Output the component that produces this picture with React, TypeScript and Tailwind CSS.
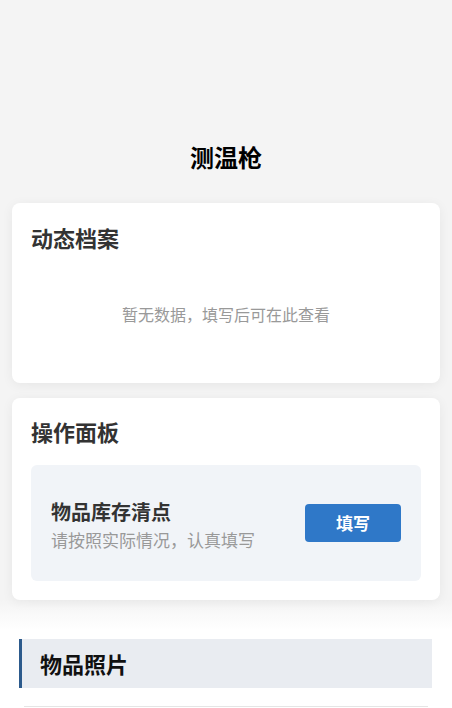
import React from "react";

const font = { fontFamily: '"Noto Sans CJK SC", "Noto Sans", sans-serif' };

function Card({ children, className = "" }: { children: React.ReactNode; className?: string }) {
  return (
    <div className={`bg-white rounded-lg shadow-[0_2px_12px_rgba(0,0,0,0.06)] ${className}`}>
      {children}
    </div>
  );
}

export default function App() {
  return (
    <div className="min-h-[708px] bg-[#f4f4f4]" style={font}>
      <div className="px-3">
        {/* 页面标题 */}
        <div className="pt-[139px] pb-[28px] text-center">
          <h1 className="text-[24px] leading-[36px] font-bold text-black">测温枪</h1>
        </div>

        {/* 动态档案 */}
        <Card className="h-[180px] px-[19px] pt-[19px]">
          <h2 className="text-[22px] leading-[30px] font-bold text-[#333]">动态档案</h2>
          <p className="mt-[50px] text-center text-[16px] leading-[24px] text-[#999]">
            暂无数据，填写后可在此查看
          </p>
        </Card>

        {/* 操作面板 */}
        <Card className="relative z-10 mt-[15px] px-[19px] pt-[18px] pb-[19px]">
          <h2 className="text-[22px] leading-[30px] font-bold text-[#333]">操作面板</h2>
          <div className="mt-[19px] h-[116px] rounded-md bg-[#f1f4f8] flex items-center justify-between pl-[20px] pr-[20px]">
            <div className="pt-[4px]">
              <div className="text-[20px] leading-[28px] font-bold text-[#333]">物品库存清点</div>
              <div className="text-[17px] leading-[27px] text-[#999]">请按照实际情况，认真填写</div>
            </div>
            <button className="w-[96px] h-[38px] rounded bg-[#2f78c8] text-white text-[17px] font-bold">
              填写
            </button>
          </div>
        </Card>
      </div>

      {/* 物品照片 */}
      <div className="bg-[linear-gradient(to_bottom,#f4f4f4,#ffffff_30px)] pl-[19px] pr-[20px] pt-[39px]">
        <div className="flex h-[49px]">
          <div className="w-[3px] bg-[#2c5a8c]" />
          <div className="flex-1 bg-[#e9ecf1] flex items-center pl-[18px]">
            <span className="text-[22px] font-bold text-[#111]">物品照片</span>
          </div>
        </div>
        <div className="ml-[5px] mr-[4px] mt-[18px] border-t border-[#e5e5e5] h-[10px]" />
      </div>
    </div>
  );
}
